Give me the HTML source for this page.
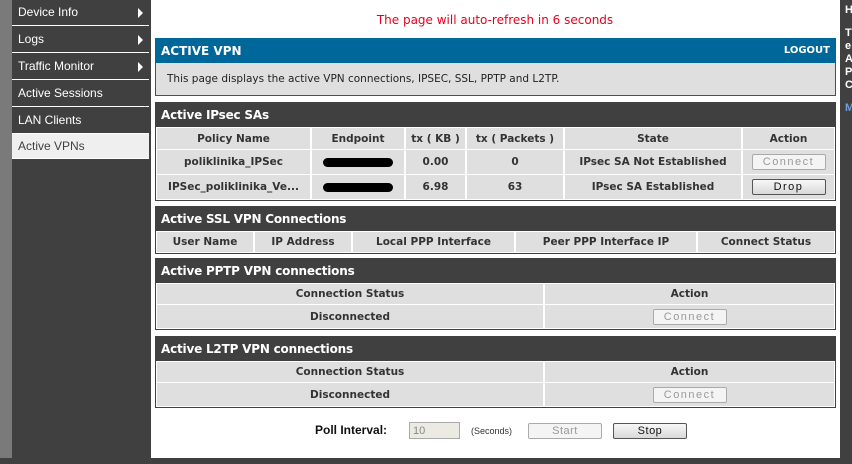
<!DOCTYPE html>
<html><head><meta charset="utf-8"><style>
*{margin:0;padding:0;box-sizing:border-box}
body{width:852px;height:464px;overflow:hidden;background:#fff;position:relative;font-family:"DejaVu Sans",Verdana,sans-serif;}
.strip{position:absolute;left:0;top:0;width:12px;height:464px;background:#7a7a7a}
.menu{position:absolute;left:12px;top:0;width:137px;height:464px;background:#404040}
.mi{position:absolute;left:0;width:137px;height:26px;color:#fff;font:12px "Liberation Sans",Arial,sans-serif;padding:5px 0 0 6px;border-bottom:1px solid #fff}
.mi .ar{position:absolute;right:6px;top:8px;width:0;height:0;border-left:5px solid #fff;border-top:5px solid transparent;border-bottom:5px solid transparent}
.mi.sel{background:#efefef;color:#404040}
.mainb{position:absolute;left:149px;top:0;width:2px;height:459px;background:#404040}
.right{position:absolute;left:840px;top:0;width:12px;height:464px;background:#404040;color:#fff;font:bold 11px "Liberation Sans",Arial,sans-serif;padding-left:5px;overflow:hidden;line-height:13px}
.bottom{position:absolute;left:0;top:458px;width:852px;height:6px;background:#404040}
.refresh{position:absolute;left:150px;width:690px;top:13px;text-align:center;color:#e8001c;font-size:12px}
.sec{position:absolute;left:155px;width:681px;border:1px solid #404040;background:#fff}
.hd{height:24px;background:#404040;color:#fff;font-weight:bold;font-size:12px;padding:5px 0 0 5px;letter-spacing:-0.2px}
.row{display:flex;gap:2px;margin:1px 1px 0 1px}
.row:last-child{margin-bottom:1px}
.c{background:#dfdfdf;font-weight:bold;font-size:10.5px;color:#333;text-align:center;display:flex;align-items:center;justify-content:center;white-space:nowrap;overflow:hidden}
.btn{width:74px;height:16px;border:1px solid #aaa;border-radius:2px;background:#f4f4f4;font:11px "Liberation Sans",Arial,sans-serif;color:#999;letter-spacing:1.5px;display:flex;align-items:center;justify-content:center;font-weight:normal}
.btn.on{border-color:#555;color:#111;background:linear-gradient(#f8f8f8,#d8d8d8)}
.blob{width:70px;height:9px;background:#000;border-radius:5px}
</style></head><body>
<div class="strip"></div>
<div class="menu">
<div class="mi" style="top:0">Device Info<span class="ar"></span></div>
<div class="mi" style="top:27px">Logs<span class="ar"></span></div>
<div class="mi" style="top:54px">Traffic Monitor<span class="ar"></span></div>
<div class="mi" style="top:81px">Active Sessions</div>
<div class="mi" style="top:108px">LAN Clients</div>
<div class="mi sel" style="top:134px;height:25px">Active VPNs</div>
</div>
<div class="mainb"></div>
<div class="right"><div style="margin-top:4px">H</div><div style="margin-top:10px">T<br>e<br>A<br>P<br>C</div><div style="margin-top:10px;color:#6fa0e0">M</div></div>
<div class="bottom"></div>
<div class="refresh">The page will auto-refresh in 6 seconds</div>

<div class="sec" style="top:38px;height:58px;border-color:#00679a">
<div style="height:24px;background:#00679a;color:#fff;font-weight:bold;font-size:12px;padding:5px 5px 0 5px;display:flex;justify-content:space-between"><span>ACTIVE VPN</span><span style="font-size:10px;padding-top:1px">LOGOUT</span></div>
<div style="background:#dfdfdf;height:32px;font-size:10.5px;color:#222;padding:10px 0 0 11px">This page displays the active VPN connections, IPSEC, SSL, PPTP and L2TP.</div>
</div>

<div class="sec" style="top:102px">
<div class="hd">Active IPsec SAs</div>
<div class="row" style="height:21px"><div class="c" style="width:153px">Policy Name</div><div class="c" style="width:92px">Endpoint</div><div class="c" style="width:59px">tx ( KB )</div><div class="c" style="width:96px">tx ( Packets )</div><div class="c" style="width:176px">State</div><div class="c" style="flex:1">Action</div></div>
<div class="row" style="height:24px"><div class="c" style="width:153px">poliklinika_IPSec</div><div class="c" style="width:92px"><div class="blob"></div></div><div class="c" style="width:59px">0.00</div><div class="c" style="width:96px">0</div><div class="c" style="width:176px">IPsec SA Not Established</div><div class="c" style="flex:1"><div class="btn">Connect</div></div></div>
<div class="row" style="height:24px"><div class="c" style="width:153px">IPSec_poliklinika_Ve...</div><div class="c" style="width:92px"><div class="blob"></div></div><div class="c" style="width:59px">6.98</div><div class="c" style="width:96px">63</div><div class="c" style="width:176px">IPsec SA Established</div><div class="c" style="flex:1"><div class="btn on">Drop</div></div></div>
</div>

<div class="sec" style="top:206px">
<div class="hd">Active SSL VPN Connections</div>
<div class="row" style="height:20px"><div class="c" style="width:96px">User Name</div><div class="c" style="width:96px">IP Address</div><div class="c" style="width:161px">Local PPP Interface</div><div class="c" style="width:180px">Peer PPP Interface IP</div><div class="c" style="flex:1">Connect Status</div></div>
</div>

<div class="sec" style="top:258px">
<div class="hd">Active PPTP VPN connections</div>
<div class="row" style="height:20px"><div class="c" style="width:386px">Connection Status</div><div class="c" style="flex:1">Action</div></div>
<div class="row" style="height:23px"><div class="c" style="width:386px">Disconnected</div><div class="c" style="flex:1"><div class="btn">Connect</div></div></div>
</div>

<div class="sec" style="top:336px">
<div class="hd">Active L2TP VPN connections</div>
<div class="row" style="height:20px"><div class="c" style="width:386px">Connection Status</div><div class="c" style="flex:1">Action</div></div>
<div class="row" style="height:23px"><div class="c" style="width:386px">Disconnected</div><div class="c" style="flex:1"><div class="btn">Connect</div></div></div>
</div>

<div style="position:absolute;top:423px;left:315px;font:bold 12px 'Liberation Sans',Arial,sans-serif;color:#111">Poll Interval:</div>
<div style="position:absolute;top:422px;left:409px;width:51px;height:17px;border:1px solid #aaa;background:#ebebe4;font:11px 'Liberation Sans',Arial;color:#888;padding:2px 0 0 3px">10</div>
<div style="position:absolute;top:426px;left:471px;font:9px 'Liberation Sans',Arial;color:#333">(Seconds)</div>
<div class="btn" style="position:absolute;top:423px;left:528px;width:74px;letter-spacing:0.5px">Start</div>
<div class="btn on" style="position:absolute;top:423px;left:613px;width:74px;letter-spacing:0.5px">Stop</div>
</body></html>
